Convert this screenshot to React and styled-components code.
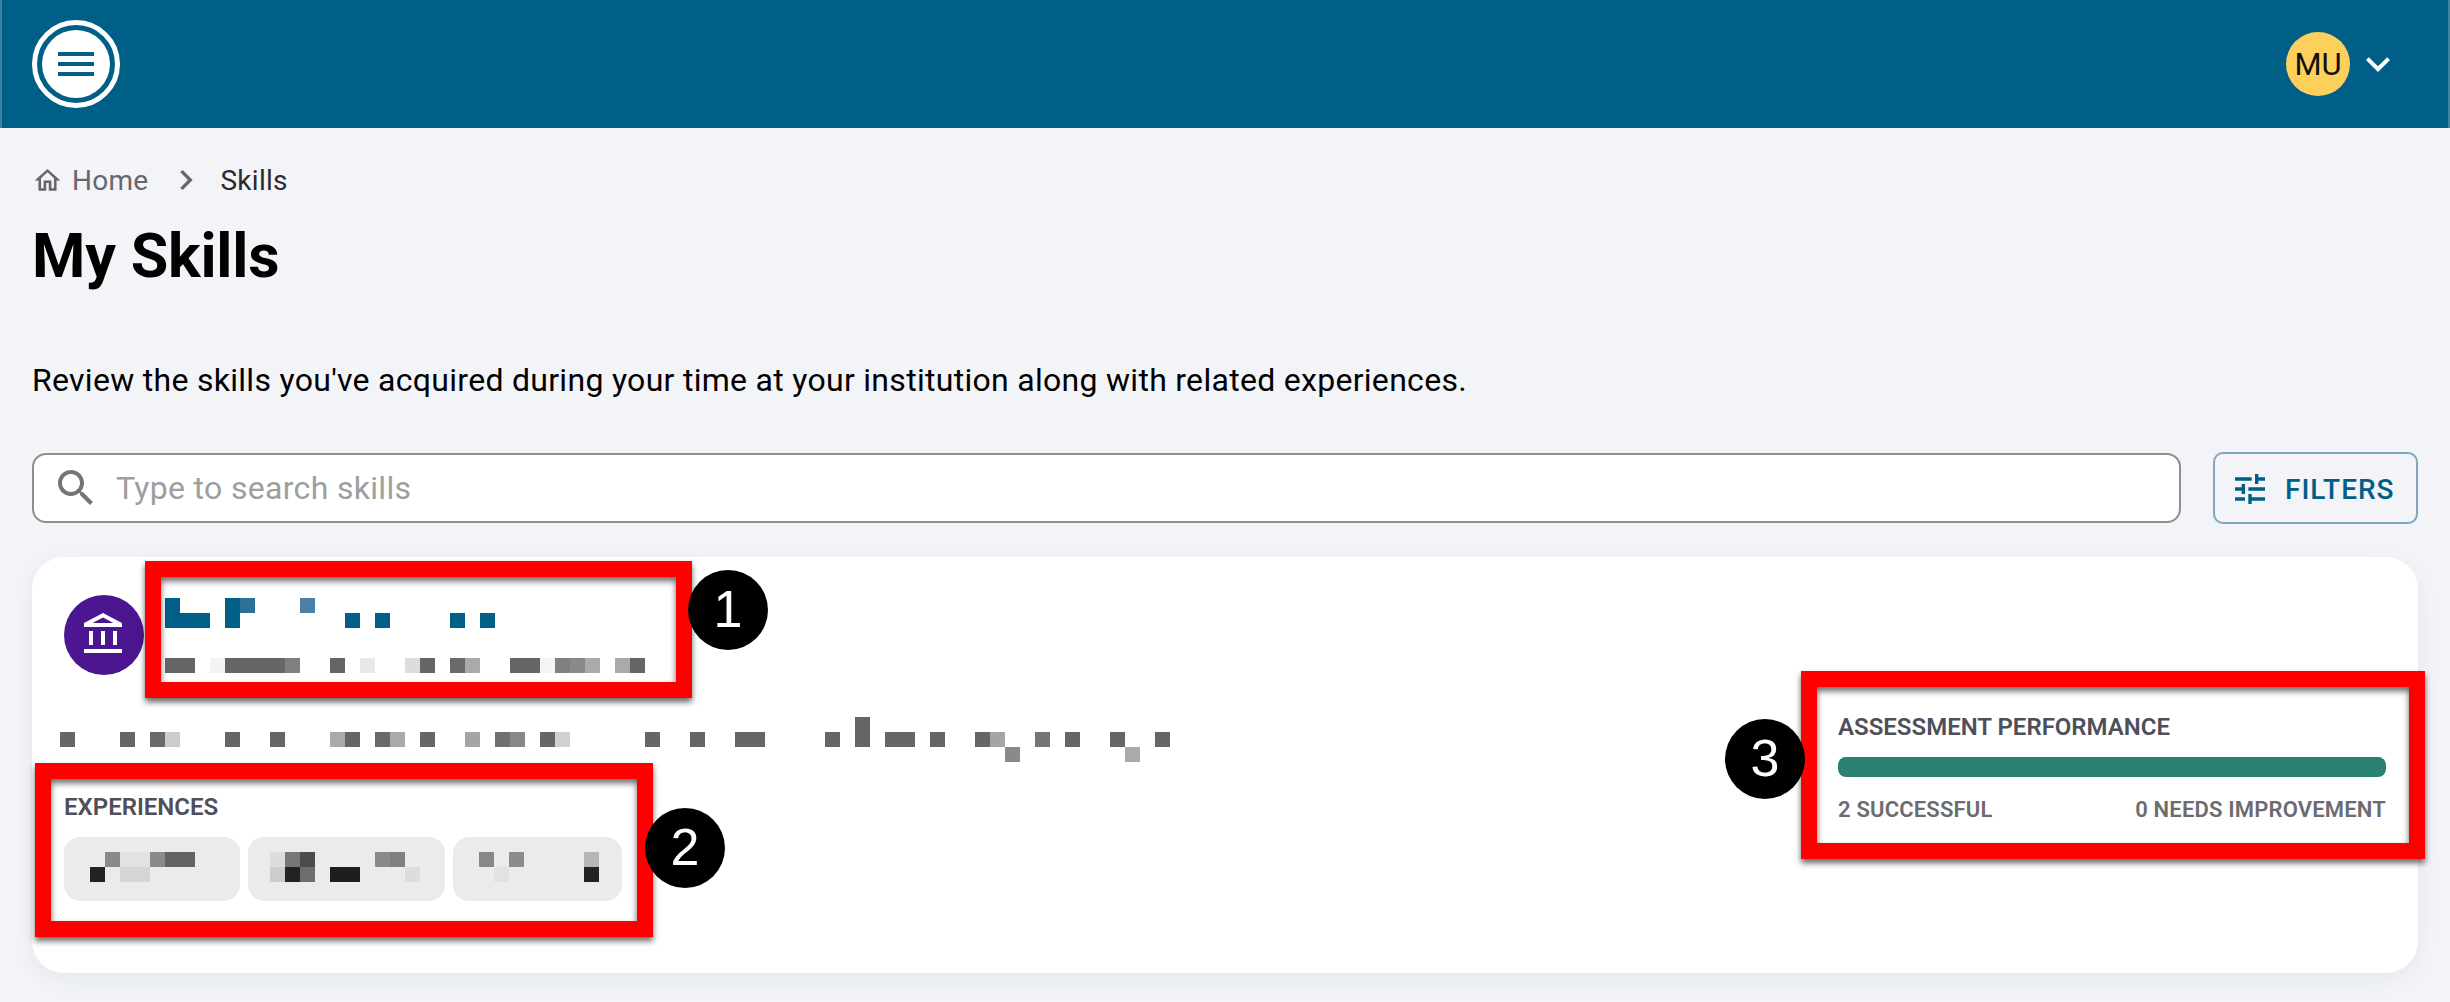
import React from "react"
import styled, { createGlobalStyle } from "styled-components"

const GlobalStyle = createGlobalStyle`
  * { box-sizing: border-box; }
  html, body { margin: 0; padding: 0; }
  body {
    background: #f2f4f8;
    font-family: Roboto, "Liberation Sans", sans-serif;
    color: #000;
  }
`

const Page = styled.div`
  width: 2450px;
  height: 1002px;
  overflow: hidden;
  background: #f2f4f8;
`

const Header = styled.header`
  height: 128px;
  display: flex;
  align-items: center;
  justify-content: space-between;
  padding: 0 46px 0 30px;
  background: #005f86;
  border-left: 2px solid #3f83a3;
  border-right: 2px solid #3f83a3;
`

const MenuButton = styled.button`
  width: 88px;
  height: 88px;
  padding: 0;
  display: flex;
  align-items: center;
  justify-content: center;
  border: 5px solid #fff;
  border-radius: 50%;
  background: transparent;
`

const MenuDisc = styled.span`
  width: 68px;
  height: 68px;
  display: flex;
  align-items: center;
  justify-content: center;
  border-radius: 50%;
  background: #fff;
`

const UserMenu = styled.div`
  display: flex;
  align-items: center;
  gap: 4px;
`

const Avatar = styled.div`
  width: 64px;
  height: 64px;
  display: flex;
  align-items: center;
  justify-content: center;
  border-radius: 50%;
  background: #fdd05c;
  color: #111;
  font-size: 31px;
`

const Main = styled.main`
  padding: 32px 32px 0;
`

const Breadcrumb = styled.nav`
  height: 40px;
  display: flex;
  align-items: center;
  font-size: 28px;
  letter-spacing: 0.28px;
`

const Crumb = styled.span`
  color: ${(p) => (p.$current ? "#2a2a30" : "#66666e")};
  margin-left: ${(p) => (p.$current ? "14px" : "9px")};
  margin-right: ${(p) => (p.$current ? "0" : "18px")};
`

const Title = styled.h1`
  margin: 20px 0 0;
  font-size: 61px;
  line-height: 72px;
  font-weight: 700;
  letter-spacing: -0.2px;
`

const Intro = styled.p`
  margin: 66px 0 0;
  font-size: 32px;
  line-height: 44px;
  letter-spacing: 0.29px;
`

const SearchRow = styled.div`
  margin-top: 50px;
  height: 72px;
  display: flex;
  align-items: center;
  gap: 32px;
`

const SearchBox = styled.label`
  flex: 1;
  height: 70px;
  display: flex;
  align-items: center;
  gap: 16px;
  padding: 0 18px;
  background: #fff;
  border: 2px solid #8f8f8f;
  border-radius: 14px;
`

const SearchInput = styled.input`
  flex: 1;
  border: 0;
  outline: 0;
  padding: 0;
  background: transparent;
  font-family: inherit;
  font-size: 32px;
  letter-spacing: 0.32px;

  &::placeholder {
    color: #9e9e9e;
    opacity: 1;
  }
`

const FilterButton = styled.button`
  width: 205px;
  height: 72px;
  display: flex;
  align-items: center;
  gap: 15px;
  padding: 2px 0 0 15px;
  background: transparent;
  border: 2px solid #80a6bf;
  border-radius: 10px;
  color: #005f86;
  font-family: inherit;
  font-size: 28px;
  font-weight: 500;
  letter-spacing: 1px;
`

const Card = styled.section`
  position: relative;
  margin-top: 33px;
  height: 416px;
  padding: 38px 32px 0;
  background: #fff;
  border-radius: 32px;
  box-shadow: 0 6px 24px rgba(20, 30, 60, 0.06);
`

const CardHead = styled.div`
  display: flex;
  align-items: center;
  gap: 21px;
`

const Institution = styled.div`
  width: 80px;
  height: 80px;
  display: flex;
  align-items: center;
  justify-content: center;
  border-radius: 50%;
  background: #4b1690;
`

const CardBody = styled.div`
  display: flex;
  justify-content: space-between;
`

const Mosaic = styled.svg`
  display: block;
  flex: none;
  shape-rendering: crispEdges;
`

const Description = styled.div`
  margin: 42px 0 0 -4px;
`

const SectionLabel = styled.h2`
  margin: ${(p) => (p.$first ? "38px" : "31px")} 0 0;
  font-size: 24px;
  line-height: 28px;
  font-weight: 600;
  color: #4f4f5a;
`

const Chips = styled.div`
  margin-top: 16px;
  display: flex;
  gap: 8px;
`

const Chip = styled.div`
  height: 64px;
  padding: 15px 22px 0;
  background: #ebebeb;
  border-radius: 16px;
`

const Assessment = styled.div`
  width: 548px;
`

const Bar = styled.div`
  height: 20px;
  margin-top: 16px;
  background: #2b8074;
  border-radius: 8px;
`

const BarLabels = styled.div`
  margin-top: 19px;
  display: flex;
  justify-content: space-between;
  font-size: 22px;
  line-height: 28px;
  font-weight: 600;
  letter-spacing: 0.18px;
  color: #6b6b70;
`

const Frame = styled.div`
  position: absolute;
  left: ${(p) => p.$left}px;
  top: ${(p) => p.$top}px;
  width: ${(p) => p.$width}px;
  height: ${(p) => p.$height}px;
  border: 16px solid #ff0000;
  box-shadow: 0 4px 6px rgba(0, 0, 0, 0.6), inset 0 4px 6px rgba(0, 0, 0, 0.6);
  pointer-events: none;
`

const Badge = styled.div`
  position: absolute;
  left: ${(p) => p.$left}px;
  top: ${(p) => p.$top}px;
  width: 80px;
  height: 80px;
  padding-bottom: 2px;
  display: flex;
  align-items: center;
  justify-content: center;
  border-radius: 50%;
  background: #000;
  color: #fff;
  font-family: "Liberation Sans", Arial, sans-serif;
  font-size: 52px;
`

// pixelated (censored) text, cells are [x, y, w, h, colour] on the page's 15px grid
const titleCells = [
  [165, 597, 15, 30, "#005f86"], [180, 612, 30, 15, "#005f86"],
  [225, 597, 15, 30, "#005f86"], [240, 597, 15, 15, "#2a7099"], [300, 597, 15, 15, "#4a80a5"],
  [345, 612, 15, 15, "#005f86"], [375, 612, 15, 15, "#005f86"],
  [450, 612, 15, 15, "#005f86"], [480, 612, 15, 15, "#005f86"],
  [165, 657, 30, 15, "#666"], [210, 657, 15, 15, "#f3f3f3"], [225, 657, 60, 15, "#666"],
  [285, 657, 15, 15, "#808080"], [330, 657, 15, 15, "#666"], [360, 657, 15, 15, "#e8e8e8"],
  [405, 657, 15, 15, "#ddd"], [420, 657, 15, 15, "#666"], [450, 657, 15, 15, "#6a6a6a"],
  [465, 657, 15, 15, "#aaa"], [510, 657, 30, 15, "#666"], [540, 657, 15, 15, "#f5f5f5"],
  [555, 657, 15, 15, "#808080"], [570, 657, 15, 15, "#8a8a8a"], [585, 657, 15, 15, "#aaa"],
  [615, 657, 15, 15, "#aaa"], [630, 657, 15, 15, "#666"],
]

const descriptionCells = [
  [60, 732, 15, 15, "#666"], [120, 732, 15, 15, "#666"], [150, 732, 15, 15, "#6a6a6a"],
  [165, 732, 15, 15, "#ccc"], [225, 732, 15, 15, "#666"], [270, 732, 15, 15, "#666"],
  [330, 732, 15, 15, "#aaa"], [345, 732, 15, 15, "#666"], [375, 732, 15, 15, "#6a6a6a"],
  [390, 732, 15, 15, "#aaa"], [420, 732, 15, 15, "#666"], [465, 732, 15, 15, "#a5a5a5"],
  [495, 732, 15, 15, "#707070"], [510, 732, 15, 15, "#888"], [540, 732, 15, 15, "#666"],
  [555, 732, 15, 15, "#d0d0d0"], [645, 732, 15, 15, "#666"], [690, 732, 15, 15, "#666"],
  [735, 732, 30, 15, "#666"], [825, 732, 15, 15, "#666"], [855, 717, 15, 30, "#666"],
  [885, 732, 30, 15, "#666"], [930, 732, 15, 15, "#666"], [975, 732, 15, 15, "#666"],
  [990, 732, 15, 15, "#a5a5a5"], [1005, 747, 15, 15, "#8a8a8a"], [1035, 732, 15, 15, "#757575"],
  [1065, 732, 15, 15, "#666"], [1110, 732, 15, 15, "#666"], [1125, 747, 15, 15, "#aaa"],
  [1155, 732, 15, 15, "#666"],
]

const chipMosaics = [
  {
    x: 86,
    width: 132,
    cells: [
      [90, 867, 15, 15, "#222"], [105, 852, 15, 15, "#8a8a8a"], [120, 852, 30, 15, "#e2e2e2"],
      [120, 867, 30, 15, "#d5d5d5"], [150, 852, 15, 15, "#8a8a8a"], [165, 852, 30, 15, "#626262"],
    ],
  },
  {
    x: 270,
    width: 153,
    cells: [
      [270, 852, 15, 15, "#ddd"], [270, 867, 15, 15, "#ccc"], [285, 852, 15, 15, "#777"],
      [285, 867, 15, 15, "#222"], [300, 852, 15, 15, "#4c4c4c"], [300, 867, 15, 15, "#6d6d6d"],
      [330, 867, 30, 15, "#1e1e1e"], [375, 852, 15, 15, "#8a8a8a"], [390, 852, 15, 15, "#808080"],
      [405, 867, 15, 15, "#ddd"],
    ],
  },
  {
    x: 476,
    width: 125,
    cells: [
      [480, 852, 15, 15, "#888"], [495, 867, 15, 15, "#e2e2e2"], [510, 852, 15, 15, "#8c8c8c"],
      [585, 852, 15, 15, "#b5b5b5"], [585, 867, 15, 15, "#222"],
    ],
  },
]

const Pixels = ({ x, y, width, height, cells }) => (
  <Mosaic width={width} height={height} viewBox={`${x} ${y} ${width} ${height}`}>
    {cells.map(([cx, cy, w, h, fill]) => (
      <rect key={`${cx}-${cy}`} x={cx} y={cy} width={w} height={h} fill={fill} />
    ))}
  </Mosaic>
)

const Icon = ({ size, color, d }) => (
  <svg width={size} height={size} viewBox="0 0 24 24" fill={color} style={{ flex: "none" }}>
    <path d={d} />
  </svg>
)

const paths = {
  home: "m12 5.69 5 4.5V18h-2v-6H9v6H7v-7.81zM12 3 2 12h3v8h6v-6h2v6h6v-8h3z",
  next: "M10 6 8.59 7.41 13.17 12l-4.58 4.59L10 18l6-6z",
  expand: "M16.59 8.59 12 13.17 7.41 8.59 6 10l6 6 6-6z",
  search:
    "M15.5 14h-.79l-.28-.27C15.41 12.59 16 11.11 16 9.5 16 5.91 13.09 3 9.5 3S3 5.91 3 9.5 5.91 16 9.5 16c1.61 0 3.09-.59 4.23-1.57l.27.28v.79l5 4.99L20.49 19l-4.99-5zm-6 0C7.01 14 5 11.99 5 9.5S7.01 5 9.5 5 14 7.01 14 9.5 11.99 14 9.5 14z",
  tune: "M3 17v2h6v-2H3zM3 5v2h10V5H3zm10 16v-2h8v-2h-8v-2h-2v6h2zM7 9v2H3v2h4v2h2V9H7zm14 4v-2H11v2h10zm-6-4h2V7h4V5h-4V3h-2v6z",
  bank: "M6.5 10h-2v7h2v-7zm6 0h-2v7h2v-7zm8.5 9H2v2h19v-2zm-2.5-9h-2v7h2v-7zm-7-6.74L16.71 6H6.29l5.21-2.74m0-2.26L2 6v2h19V6l-9.5-5z",
}

const App = () => (
  <Page>
    <GlobalStyle />
    <Header>
      <MenuButton aria-label="Menu">
        <MenuDisc>
          <svg width="36" height="24" viewBox="0 0 36 24" fill="#005f86">
            <rect y="0" width="36" height="4" />
            <rect y="10" width="36" height="4" />
            <rect y="20" width="36" height="4" />
          </svg>
        </MenuDisc>
      </MenuButton>
      <UserMenu>
        <Avatar>MU</Avatar>
        <Icon size={48} color="#fff" d={paths.expand} />
      </UserMenu>
    </Header>

    <Main>
      <Breadcrumb>
        <Icon size={31} color="#66666e" d={paths.home} />
        <Crumb>Home</Crumb>
        <Icon size={40} color="#66666e" d={paths.next} />
        <Crumb $current>Skills</Crumb>
      </Breadcrumb>
      <Title>My Skills</Title>
      <Intro>Review the skills you've acquired during your time at your institution along with related experiences.</Intro>

      <SearchRow>
        <SearchBox>
          <Icon size={48} color="#757575" d={paths.search} />
          <SearchInput placeholder="Type to search skills" />
        </SearchBox>
        <FilterButton>
          <Icon size={40} color="#005f86" d={paths.tune} />
          FILTERS
        </FilterButton>
      </SearchRow>

      <Card>
        <CardHead>
          <Institution>
            <Icon size={48} color="#fff" d={paths.bank} />
          </Institution>
          <Pixels x={165} y={597} width={480} height={75} cells={titleCells} />
        </CardHead>

        <CardBody>
          <div>
            <Description>
              <Pixels x={60} y={717} width={1110} height={45} cells={descriptionCells} />
            </Description>
            <SectionLabel>EXPERIENCES</SectionLabel>
            <Chips>
              {chipMosaics.map((chip) => (
                <Chip key={chip.x}>
                  <Pixels x={chip.x} y={852} width={chip.width} height={30} cells={chip.cells} />
                </Chip>
              ))}
            </Chips>
          </div>
          <Assessment>
            <SectionLabel $first>ASSESSMENT PERFORMANCE</SectionLabel>
            <Bar />
            <BarLabels>
              <span>2 SUCCESSFUL</span>
              <span>0 NEEDS IMPROVEMENT</span>
            </BarLabels>
          </Assessment>
        </CardBody>

        <Frame $left={113} $top={4} $width={547} $height={137} />
        <Badge $left={656} $top={13}>1</Badge>
        <Frame $left={3} $top={206} $width={618} $height={174} />
        <Badge $left={613} $top={251}>2</Badge>
        <Frame $left={1769} $top={114} $width={624} $height={188} />
        <Badge $left={1693} $top={162}>3</Badge>
      </Card>
    </Main>
  </Page>
)

export default App
